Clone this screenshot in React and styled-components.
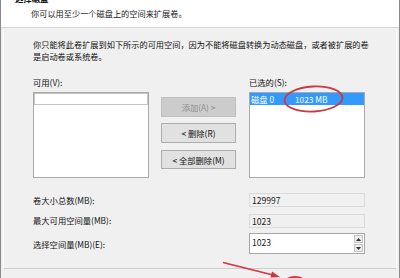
import React from "react";
import styled, { createGlobalStyle } from "styled-components";

const Global = createGlobalStyle`
  html, body { margin: 0; padding: 0; background: #f0f0f0; }
  body { font-family: "Noto Sans CJK SC", "Noto Sans", sans-serif; }
`;

const Window = styled.div`
  position: relative;
  width: 400px;
  height: 278px;
  box-sizing: border-box;
  overflow: hidden;
  background: #f0f0f0;
  border-left: 1px solid #8a8a8a;
  border-right: 1px solid #8a8a8a;
  font-family: "Noto Sans CJK SC", "Noto Sans", sans-serif;
  color: #111;
`;

const Header = styled.div`
  height: 27px;
  background: #ffffff;
  border-bottom: 1px solid #d4d4d4;
  box-sizing: content-box;
  overflow: hidden;
`;

const Title = styled.div`
  margin: -7px 0 0 14px;
  height: 10px;
  line-height: 10px;
  font-size: 8.4px;
  font-weight: 700;
  color: #111;
`;

const Subtitle = styled.div`
  margin: 5px 0 0 30px;
  line-height: 10px;
  font-size: 8.2px;
  color: #1a1a1a;
`;

const Frame = styled.div`
  margin: 0 2px;
  height: 241px;
  box-sizing: border-box;
  border: 1px solid #fbfbfb;
  border-top-color: #f3f3f3;
  border-bottom-color: #cfcfcf;
  padding: 9px 0 0 29px;
`;

const Para = styled.p`
  margin: 0;
  font-size: 8.2px;
  line-height: 12px;
  white-space: nowrap;
`;

const Columns = styled.div`
  margin-top: 14px;
  display: grid;
  grid-template-columns: 116px 76px 116px;
  grid-template-rows: 12px 86px;
  column-gap: 12px;
  row-gap: 4px;
`;

const Label = styled.div`
  font-size: 8.3px;
  line-height: 12px;
  white-space: nowrap;
`;

const ListBox = styled.div`
  position: relative;
  box-sizing: border-box;
  border: 1px solid #a9a9a9;
  background: #ffffff;
  grid-row: 2;
`;

const Row = styled.div`
  height: 12px;
  box-sizing: border-box;
  display: flex;
  align-items: center;
  font-size: 8.3px;
  line-height: 12px;
  white-space: nowrap;
  background: ${(p) => (p.$selected ? "#3399ff" : "#ffffff")};
  color: ${(p) => (p.$selected ? "#ffffff" : "#222")};
  border: ${(p) => (p.$focus ? "1px solid #c4c4c4" : "none")};
`;

const Cell = styled.span`
  width: ${(p) => p.$w || "auto"};
  padding-left: ${(p) => p.$pl || 0};
  flex-shrink: 0;
`;

const ButtonCol = styled.div`
  grid-row: 2;
  grid-column: 2;
  display: flex;
  flex-direction: column;
  gap: 6px;
  padding-top: 5px;
`;

const Button = styled.div`
  height: 20px;
  width: 75px;
  box-sizing: border-box;
  display: flex;
  align-items: center;
  justify-content: center;
  font-size: 8.3px;
  white-space: nowrap;
  background: ${(p) => (p.$disabled ? "#cccccc" : "#e1e1e1")};
  border: 1px solid ${(p) => (p.$disabled ? "#bfbfbf" : "#adadad")};
  color: ${(p) => (p.$disabled ? "#8d8d8d" : "#111")};
  &:nth-child(3) { height: 19px; margin-top: 1px; }
`;

const Fields = styled.div`
  margin-top: 15px;
  display: grid;
  grid-template-columns: 216px 116px;
  grid-template-rows: 14px 14px 21px;
  row-gap: 6px;
  align-items: center;
  & > :nth-child(4) { margin-top: 1px; }
`;

const ReadOnly = styled.div`
  height: 14px;
  box-sizing: border-box;
  border: 1px solid #dadada;
  background: #f0f0f0;
  font-size: 8.6px;
  line-height: 12px;
  padding-left: 2px;
  color: #222;
`;

const Spin = styled.div`
  height: 21px;
  box-sizing: border-box;
  border: 1px solid #a6a6a6;
  background: #ffffff;
  display: flex;
  align-items: center;
  justify-content: space-between;
  padding: 0 1px 0 2px;
  font-size: 8.6px;
  color: #222;
`;

const SpinText = styled.span`
  margin-top: -3px;
`;

const SpinButtons = styled.div`
  display: flex;
  flex-direction: column;
  gap: 1px;
  width: 9px;
`;

const SpinBtn = styled.div`
  height: 8px;
  box-sizing: border-box;
  border: 1px solid #c4c4c4;
  background: #ececec;
  display: flex;
  align-items: center;
  justify-content: center;
`;

const Bottom = styled.div`
  height: 10px;
  background: #f0f0f0;
`;

const Overlay = styled.svg`
  position: absolute;
  left: 0;
  top: 0;
  pointer-events: none;
`;

const Tri = ({ up }) => (
  <svg width="5" height="3" viewBox="0 0 5 3">
    <path d={up ? "M0 3 L2.5 0 L5 3 Z" : "M0 0 L2.5 3 L5 0 Z"} fill="#333" />
  </svg>
);

export default function App() {
  return (
    <>
      <Global />
      <Window>
        <Header>
          <Title>选择磁盘</Title>
          <Subtitle>你可以用至少一个磁盘上的空间来扩展卷。</Subtitle>
        </Header>
        <Frame>
          <Para>
            你只能将此卷扩展到如下所示的可用空间，因为不能将磁盘转换为动态磁盘，或者被扩展的卷
            <br />
            是启动卷或系统卷。
          </Para>
          <Columns>
            <Label>可用(V):</Label>
            <div />
            <Label>已选的(S):</Label>
            <ListBox>
              <Row $focus />
            </ListBox>
            <ButtonCol>
              <Button $disabled>添加(A) &gt;</Button>
              <Button>&lt; 删除(R)</Button>
              <Button>&lt; 全部删除(M)</Button>
            </ButtonCol>
            <ListBox>
              <Row $selected>
                <Cell $w="44px" $pl="1px">磁盘 0</Cell>
                <Cell>1023 MB</Cell>
              </Row>
            </ListBox>
          </Columns>
          <Fields>
            <Label>卷大小总数(MB):</Label>
            <ReadOnly>129997</ReadOnly>
            <Label>最大可用空间量(MB):</Label>
            <ReadOnly>1023</ReadOnly>
            <Label>选择空间量(MB)(E):</Label>
            <Spin>
              <SpinText>1023</SpinText>
              <SpinButtons>
                <SpinBtn><Tri up /></SpinBtn>
                <SpinBtn><Tri /></SpinBtn>
              </SpinButtons>
            </Spin>
          </Fields>
        </Frame>
        <Bottom />
        <Overlay width="400" height="278" viewBox="0 0 400 278">
          <ellipse
            cx="312.5"
            cy="99"
            rx="29"
            ry="12.5"
            fill="none"
            stroke="#c83a40"
            strokeWidth="1.8"
            transform="rotate(-3 312.5 99)"
          />
          <line x1="222" y1="262.5" x2="274" y2="275.5" stroke="#d8323a" strokeWidth="1.6" />
          <path d="M279 277 L271 271.5 L269.5 277.5 Z" fill="#d8323a" />
          <ellipse cx="294" cy="293" rx="16" ry="16" fill="none" stroke="#d8323a" strokeWidth="2" />
        </Overlay>
      </Window>
    </>
  );
}
